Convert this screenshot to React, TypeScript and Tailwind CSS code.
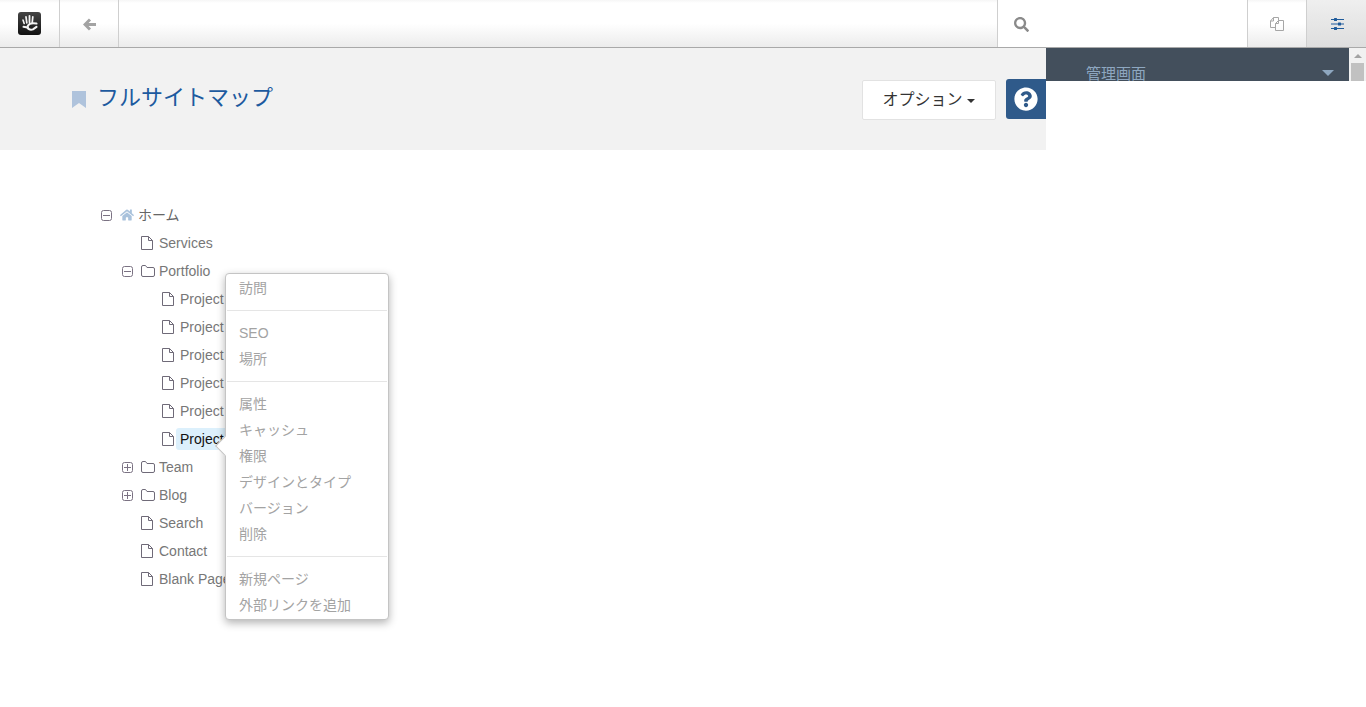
import React from "react";
import { FaSearch, FaHome, FaQuestionCircle } from "react-icons/fa";

const Logo = () => (
  <svg width="24" height="24" viewBox="0 0 24 24">
    <defs>
      <linearGradient id="lg" x1="0" y1="0" x2="0" y2="1">
        <stop offset="0" stopColor="#444" />
        <stop offset="1" stopColor="#111" />
      </linearGradient>
    </defs>
    <rect x="0" y="0" width="23" height="23" rx="3" fill="url(#lg)" />
    <g stroke="#f4f4f4" strokeLinecap="round" fill="none">
      <path d="M5 8 L6.2 11.5" strokeWidth="1.6" />
      <path d="M8 4.8 L8.8 10.8" strokeWidth="1.7" />
      <path d="M11.5 3.8 L11.5 10.2" strokeWidth="1.8" />
      <path d="M14.8 4.8 L14.2 10.8" strokeWidth="1.7" />
      <path d="M18.5 11.5 C15.5 11 11 11.2 9.8 14 C8.8 16.8 12 18.6 15 17.4 L18.5 14.8" strokeWidth="2.1" />
      <path d="M9.5 15.5 L5.5 14.8" strokeWidth="2" />
    </g>
  </svg>
);

const BackArrow = () => (
  <svg width="13" height="13" viewBox="0 0 13 13" fill="none" stroke="#a3a3a3" strokeWidth="3" strokeLinejoin="miter">
    <path d="M7 1.5 L2 6.5 L7 11.5" />
    <path d="M2.5 6.5 H13" />
  </svg>
);

const Bookmark = () => (
  <svg width="14" height="17" viewBox="0 0 14 17" fill="#afc3dc" className="mt-[9px] mr-[12px] shrink-0">
    <path d="M0 0 H14 V17 L7 12 L0 17 Z" />
  </svg>
);

const FileIcon = () => (
  <svg width="12" height="14" viewBox="0 0 12 14" className="shrink-0" fill="none" stroke="#6f6a78" strokeWidth="1">
    <path d="M0.5 0.5 H7.5 L11.5 4.5 V13.5 H0.5 Z" />
    <path d="M7.5 0.5 V4.5 H11.5" />
  </svg>
);

const FolderIcon = () => (
  <svg width="14" height="12" viewBox="0 0 14 12" className="shrink-0" fill="none" stroke="#6f6a78" strokeWidth="1">
    <path d="M0.5 2 Q0.5 0.5 2 0.5 H4.5 L6 2.5 H12 Q13.5 2.5 13.5 4 V10 Q13.5 11.5 12 11.5 H2 Q0.5 11.5 0.5 10 Z" />
  </svg>
);

const Expander = ({ open }: { open: boolean }) => (
  <svg width="11" height="11" viewBox="0 0 11 11" className="shrink-0" fill="none" stroke="#7b7283" strokeWidth="1">
    <rect x="0.5" y="0.5" width="10" height="10" rx="2" />
    <path d="M2 5.5 H9" />
    {!open && <path d="M5.5 2 V9" />}
  </svg>
);

const CopyIcon = () => (
  <svg width="14" height="14" viewBox="0 0 14 14" fill="none" stroke="#a6a6a6" strokeWidth="1">
    <path d="M0.5 4 L3.5 0.5 H8.5 V3.5" />
    <path d="M0.5 4 H3.5 V0.5" />
    <path d="M0.5 4 V10.5 H5" />
    <path d="M5.5 6.5 L8.5 3.5 H13.5 V13.5 H5.5 Z" />
    <path d="M5.5 6.5 H8.5 V3.5" />
  </svg>
);

const SlidersIcon = () => (
  <svg width="13" height="12" viewBox="0 0 13 12" fill="#1f5b9b" className="ml-[1px] mt-[1px]">
    <rect x="0" y="1" width="13" height="1" />
    <rect x="3" y="0" width="3" height="3" rx="0.5" />
    <rect x="0" y="5.5" width="13" height="1" />
    <rect x="7" y="4.5" width="3" height="3" rx="0.5" />
    <rect x="0" y="10" width="13" height="1" />
    <rect x="3" y="9" width="3" height="3" rx="0.5" />
  </svg>
);

type Row = { indent: string; kind: "file" | "folder" | "home"; label: string; exp?: "open" | "closed"; active?: boolean };

const rows: Row[] = [
  { indent: "pl-[101px]", kind: "home", label: "ホーム", exp: "open" },
  { indent: "pl-[141px]", kind: "file", label: "Services" },
  { indent: "pl-[122px]", kind: "folder", label: "Portfolio", exp: "open" },
  { indent: "pl-[162px]", kind: "file", label: "Project" },
  { indent: "pl-[162px]", kind: "file", label: "Project" },
  { indent: "pl-[162px]", kind: "file", label: "Project" },
  { indent: "pl-[162px]", kind: "file", label: "Project" },
  { indent: "pl-[162px]", kind: "file", label: "Project" },
  { indent: "pl-[162px]", kind: "file", label: "Project", active: true },
  { indent: "pl-[122px]", kind: "folder", label: "Team", exp: "closed" },
  { indent: "pl-[122px]", kind: "folder", label: "Blog", exp: "closed" },
  { indent: "pl-[141px]", kind: "file", label: "Search" },
  { indent: "pl-[141px]", kind: "file", label: "Contact" },
  { indent: "pl-[141px]", kind: "file", label: "Blank Page" },
];

const TreeRow = ({ r }: { r: Row }) => (
  <div className={`flex h-[28px] items-center ${r.indent}`}>
    {r.exp && <span className="mr-[8px] flex"><Expander open={r.exp === "open"} /></span>}
    {r.kind === "home" && <FaHome className="mr-[4px] text-[14px] text-[#a9c2dc]" />}
    {r.kind === "file" && <FileIcon />}
    {r.kind === "folder" && <FolderIcon />}
    <span
      className={
        r.kind === "home"
          ? "text-[14px] text-[#666]"
          : r.active
          ? "ml-[2px] flex h-[22px] items-center rounded-[3px] bg-[#dcf0fc] px-[4px] text-[14px] text-[#111]"
          : r.kind === "folder"
          ? "ml-[4px] text-[14px] text-[#777]"
          : "ml-[6px] text-[14px] text-[#777]"
      }
    >
      {r.label}
    </span>
  </div>
);

const MenuItem = ({ children }: { children: React.ReactNode }) => (
  <div className="h-[26px] pl-[13px] text-[14px] leading-[26px] text-[#a3a3a3]">{children}</div>
);

const Divider = () => <div className="mx-[1px] my-[9px] h-px bg-[#e5e5e5]" />;

const ContextMenu = () => (
  <div className="absolute left-[225px] top-[273px] w-[164px] rounded-[4px] border border-[#c4c4c4] bg-white pt-[1px] pb-[1px] shadow-[0_3px_8px_rgba(0,0,0,0.3)]">
    <MenuItem>訪問</MenuItem>
    <Divider />
    <MenuItem>SEO</MenuItem>
    <MenuItem>場所</MenuItem>
    <Divider />
    <MenuItem>属性</MenuItem>
    <MenuItem>キャッシュ</MenuItem>
    <MenuItem>権限</MenuItem>
    <MenuItem>デザインとタイプ</MenuItem>
    <MenuItem>バージョン</MenuItem>
    <MenuItem>削除</MenuItem>
    <Divider />
    <MenuItem>新規ページ</MenuItem>
    <MenuItem>外部リンクを追加</MenuItem>
    <div className="absolute left-[-8px] top-[165px] h-[14px] w-[14px] rotate-45 border-b border-l border-[#c4c4c4] bg-white" />
  </div>
);

export default function App() {
  return (
    <div
      className="relative h-[707px] w-[1366px] overflow-hidden bg-white"
      style={{ fontFamily: '"Liberation Sans", "Noto Sans CJK JP", sans-serif' }}
    >
      <header className="flex h-[48px] border-b border-[#a9a9a9] bg-[linear-gradient(#f6f6f6_0,#fff_3px,#fff_50%,#ececec_100%)]">
        <div className="flex w-[60px] items-center justify-center border-r border-[#cfcfcf] pl-[1px]"><Logo /></div>
        <div className="flex w-[59px] items-center justify-center border-r border-[#cfcfcf] pt-[1px]">
          <BackArrow />
        </div>
        <div className="flex-1" />
        <div className="flex w-[251px] items-center border-x border-[#cfcfcf] bg-white pl-[16px] pt-[1px]">
          <FaSearch className="text-[15px] text-[#8a8a8a]" />
        </div>
        <div className="flex w-[59px] items-center justify-center border-r border-[#cfcfcf] pt-[1px]"><CopyIcon /></div>
        <div className="flex w-[59px] items-center justify-center bg-gradient-to-b from-[#efefef] to-[#dedede]"><SlidersIcon /></div>
      </header>

      <div className="flex">
        <main className="w-[1046px]">
          <div className="flex h-[102px] items-start justify-between bg-[#f2f2f2]">
            <div className="mt-[34px] ml-[72px] flex items-start">
              <Bookmark />
              <h1 className="-ml-[1px] text-[22px] font-normal leading-[32px] text-[#1d5a9f]">フルサイトマップ</h1>
            </div>
            <div className="mt-[31px] flex items-start">
              <button className="mt-[1px] flex h-[40px] w-[134px] items-center justify-center rounded-[2px] border border-[#e2e2e2] bg-white pr-[1px] text-[16px] text-[#333]">
                オプション
                <span className="ml-[4px] mt-[2px] h-0 w-0 border-x-[4px] border-t-[4px] border-x-transparent border-t-[#333]" />
              </button>
              <div className="ml-[10px] flex h-[40px] w-[40px] items-center justify-center rounded-l-[3px] bg-[#2f5a8a]">
                <FaQuestionCircle className="text-[24px] text-white" />
              </div>
            </div>
          </div>
          <div className="pt-[51px]">
            {rows.map((r, i) => <TreeRow key={i} r={r} />)}
          </div>
        </main>
        <aside className="flex h-[33px] flex-1">
          <div className="flex h-[33px] flex-1 items-start justify-between overflow-hidden bg-[#434f5c] pt-[16px] pl-[40px] pr-[15px]">
            <span className="text-[15px] leading-[20px] text-[#8ea7c0]">管理画面</span>
            <span className="mt-[6px] h-0 w-0 border-x-[6px] border-t-[6px] border-x-transparent border-t-[#8ea7c0]" />
          </div>
          <div className="flex h-[33px] w-[17px] flex-col items-center bg-[#f1f1f1]">
            <span className="mt-[6px] h-0 w-0 border-x-[4px] border-b-[4px] border-x-transparent border-b-[#a3a3a3]" />
            <span className="mt-[5px] h-[18px] w-[13px] bg-[#c1c1c1]" />
          </div>
        </aside>
      </div>
      <ContextMenu />
    </div>
  );
}
